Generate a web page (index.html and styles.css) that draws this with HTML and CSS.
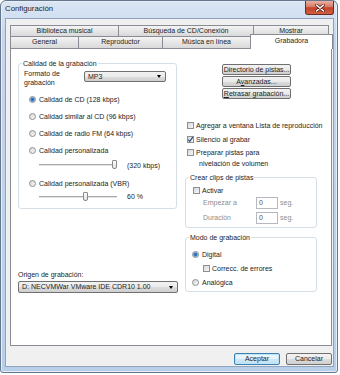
FILE: index.html
```html
<!DOCTYPE html>
<html>
    <head>
        <meta charset="utf-8" />
        <title>Configuración</title>
        <link rel="stylesheet" href="styles.css">
    </head>
    <body>
        <div class="window">
            <div class="titlebar">
                <span class="title">Configuración</span>
                <span class="close">
                    <svg width="10" height="8" viewBox="0 0 10 8">
                        <path d="M1.5 1 L8.5 7 M8.5 1 L1.5 7" stroke="#5a2017" stroke-width="3" stroke-linecap="round" />
                        <path d="M1.5 1 L8.5 7 M8.5 1 L1.5 7" stroke="#fff" stroke-width="1.6" stroke-linecap="round" />
                    </svg>
                </span>
            </div>
            <div class="client">
                <div class="tabRow">
                    <div class="tab tabBiblio">Biblioteca musical</div>
                    <div class="tab tabBusqueda">Búsqueda de CD/Conexión</div>
                    <div class="tab tabMostrar">Mostrar</div>
                </div>
                <div class="tabRow front">
                    <div class="tab tabGeneral">General</div>
                    <div class="tab tabRepro">Reproductor</div>
                    <div class="tab tabMusica">Música en línea</div>
                    <div class="tab tabGrabadora active">Grabadora</div>
                </div>
                <div class="panel">
                    <div class="col">
                        <fieldset class="group quality">
                            <legend>Calidad de la grabación</legend>
                            <div class="formatRow">
                                <span class="formatLabel">Formato de<br />grabación</span>
                                <div class="select formatSelect">MP3<span class="arrow"></span></div>
                            </div>
                            <div class="option first"><span class="radio checked"></span>Calidad de CD (128 kbps)</div>
                            <div class="option"><span class="radio"></span>Calidad similar al CD (96 kbps)</div>
                            <div class="option"><span class="radio"></span>Calidad de radio FM (64 kbps)</div>
                            <div class="option"><span class="radio"></span>Calidad personalizada</div>
                            <div class="sliderRow">
                                <span class="track"><span class="thumb" style="--pos: 1"></span></span>
                                <span>(320 kbps)</span>
                            </div>
                            <div class="option"><span class="radio"></span>Calidad personalizada (VBR)</div>
                            <div class="sliderRow last">
                                <span class="track"><span class="thumb" style="--pos: 0.6"></span></span>
                                <span>60 %</span>
                            </div>
                        </fieldset>
                        <div class="sourceLabel">Origen de grabación:</div>
                        <div class="select sourceSelect">D: NECVMWar VMware IDE CDR10 1.00<span class="arrow"></span></div>
                    </div>
                    <div class="col">
                        <div class="btnStack">
                            <div class="btn">Directorio de pistas...</div>
                            <div class="btn">A<u>v</u>anzadas...</div>
                            <div class="btn"><u>R</u>etrasar grabación...</div>
                        </div>
                        <div class="check firstCheck"><span class="box"></span>Agregar a ventana Lista de reproducción</div>
                        <div class="check">
                            <span class="box">
                                <svg width="7" height="7" viewBox="0 0 7 7"><path d="M1.2 3.6 L2.8 5.4 L5.8 1.2" fill="none" stroke="#2b4a7a" stroke-width="1.2" /></svg>
                            </span>Silencio al grabar
                        </div>
                        <div class="check multi">
                            <span class="box"></span>
                            <span>Preparar pistas para<br /><span class="indent">nivelación de volumen</span></span>
                        </div>
                        <fieldset class="group clips">
                            <legend>Crear clips de pistas</legend>
                            <div class="check activar"><span class="box"></span>Activar</div>
                            <div class="clipRow">
                                <span class="clipLabel">Empezar a</span>
                                <span class="numInput">0</span>
                                <span class="unit">seg.</span>
                            </div>
                            <div class="clipRow">
                                <span class="clipLabel">Duración</span>
                                <span class="numInput">0</span>
                                <span class="unit">seg.</span>
                            </div>
                        </fieldset>
                        <fieldset class="group mode">
                            <legend>Modo de grabación</legend>
                            <div class="option modeOption"><span class="radio checked"></span>Digital</div>
                            <div class="check errors"><span class="box"></span>Correcc. de errores</div>
                            <div class="option modeOption"><span class="radio"></span>Analógica</div>
                        </fieldset>
                    </div>
                </div>
                <div class="dialogButtons">
                    <div class="btn default">Aceptar</div>
                    <div class="btn">Cancelar</div>
                </div>
            </div>
        </div>
    </body>
</html>
```

FILE: styles.css
```css
body {
    margin: 0;
    background: #fff;
    font-family: 'Liberation Sans', Arial, sans-serif;
    font-size: 7px;
    line-height: 9px;
    color: #1c1c1c;
}

.window {
    width: 338px;
    height: 373px;
    box-sizing: border-box;
    border: 1px solid #66768c;
    border-radius: 6px 6px 3px 3px;
    background: linear-gradient(#dbe6f4, #c4d6ed 40px, #b8cfea);
    box-shadow: inset 0 0 0 1px #e6eef8;
    display: flex;
    flex-direction: column;
}

.titlebar {
    height: 16px;
    display: flex;
    justify-content: space-between;
    align-items: flex-start;
}

.title {
    font-size: 7.8px;
    line-height: 16px;
    margin-left: 4px;
    color: #1e1e1e;
}

.close {
    width: 29px;
    height: 14px;
    margin-right: 3px;
    box-sizing: border-box;
    border: 1px solid #6e2a20;
    border-top: none;
    border-radius: 0 0 3px 3px;
    background: linear-gradient(#eab0a3, #d77a64 45%, #c3412b 52%, #d0613f);
    display: flex;
    align-items: center;
    justify-content: center;
}

.client {
    flex: 1;
    margin: 1px 3px 5px 4px;
    border: 1px solid #8fa3bd;
    background: #f0f0f0;
    padding: 6px 1px 0 4px;
}

.tabRow {
    display: flex;
    height: 11px;
}

.tabRow.front {
    height: 12px;
}

.tab {
    box-sizing: border-box;
    border: 1px solid #898c95;
    border-bottom: none;
    margin-right: -1px;
    background: linear-gradient(#f4f4f4, #e6e6e6 50%, #d9d9d9);
    text-align: center;
    line-height: 10px;
}

.tabBiblio { width: 109px; }
.tabBusqueda { width: 136px; }
.tabMostrar { width: 76px; }
.tabGeneral { width: 69px; }
.tabRepro { width: 85px; }
.tabMusica { width: 89px; }

.tab.active {
    width: 83px;
    margin-top: -2px;
    margin-bottom: -1px;
    height: 15px;
    background: #fff;
    z-index: 1;
    line-height: 11px;
}

.panel {
    width: 322px;
    height: 298px;
    box-sizing: border-box;
    border: 1px solid #898c95;
    background: #fff;
    padding: 10px 0 0 7px;
    display: grid;
    grid-template-columns: 159px 132px;
    column-gap: 8px;
    align-items: start;
}

.col {
    display: flex;
    flex-direction: column;
    align-items: flex-start;
}

.group {
    margin: 0;
    min-width: 0;
    width: 100%;
    box-sizing: border-box;
    border: 1px solid #d5dfe5;
    border-radius: 3px;
    padding: 0 0 0 3px;
}

.group legend {
    padding: 0 1px;
    line-height: 9px;
}

.quality {
    padding-top: 1px;
    padding-bottom: 7px;
}

.formatRow {
    display: flex;
    margin-left: 2px;
}

.formatLabel {
    width: 60px;
}

.select {
    position: relative;
    box-sizing: border-box;
    border: 1px solid #707070;
    border-radius: 2px;
    background: linear-gradient(#f2f2f2, #ebebeb 50%, #dddddd 51%, #cfcfcf);
    line-height: 10px;
    padding-left: 3px;
}

.formatSelect {
    width: 82px;
    height: 11px;
    margin-top: 2px;
    line-height: 9px;
}

.arrow {
    position: absolute;
    right: 4px;
    top: 3px;
    border-left: 2.5px solid transparent;
    border-right: 2.5px solid transparent;
    border-top: 3px solid #000;
}

.option {
    display: flex;
    align-items: center;
    height: 17px;
    margin-left: 7px;
}

.option.first {
    margin-top: 4px;
}

.option + .sliderRow + .option {
    margin-top: 4px;
}

.radio {
    width: 7px;
    height: 7px;
    box-sizing: border-box;
    border: 1px solid #8e8f8f;
    border-radius: 50%;
    background: linear-gradient(135deg, #d6d6d6, #f8f8f8);
    margin-right: 3px;
}

.radio.checked {
    background: radial-gradient(circle, #1f5fa8 0, #3b7fd0 1.4px, #9cc3ec 2.4px, #eef2f6 2.6px);
}

.sliderRow {
    display: flex;
    align-items: center;
    height: 12px;
    margin-left: 17px;
}

.sliderRow.last {
    height: 9px;
}

.track {
    position: relative;
    width: 78px;
    height: 2px;
    box-sizing: border-box;
    border-top: 1px solid #a9a9a9;
    border-bottom: 1px solid #e3e3e3;
    margin-right: 10px;
}

.thumb {
    position: absolute;
    top: -5px;
    left: calc(var(--pos) * (100% - 5px));
    width: 5px;
    height: 9px;
    box-sizing: border-box;
    border: 1px solid #8a8a8a;
    border-radius: 1px 1px 2px 2px;
    background: linear-gradient(#fbfbfb, #e2e2e2);
}

.sourceLabel {
    margin-top: 61px;
}

.sourceSelect {
    width: 160px;
    height: 12px;
    margin-top: 2px;
}

.sourceSelect .arrow {
    top: 4px;
}

.btnStack {
    display: flex;
    flex-direction: column;
    gap: 1px;
    margin: 5px 0 0 37px;
}

.btn {
    box-sizing: border-box;
    border: 1px solid #707070;
    border-radius: 2px;
    background: linear-gradient(#f2f2f2, #ebebeb 50%, #dddddd 51%, #cfcfcf);
    text-align: center;
    white-space: nowrap;
}

.btnStack .btn {
    width: 69px;
    height: 11px;
    line-height: 9px;
}

.check {
    display: flex;
    align-items: center;
    height: 14px;
    margin-left: 2px;
    white-space: nowrap;
}

.firstCheck {
    margin-top: 19px;
}

.box {
    width: 7px;
    height: 7px;
    box-sizing: border-box;
    border: 1px solid #8e8f8f;
    background: linear-gradient(135deg, #d8d8d8, #f7f7f7);
    margin-right: 2px;
    display: flex;
    align-items: center;
    justify-content: center;
}

.box svg {
    flex: none;
}

.check.multi {
    height: auto;
    align-items: flex-start;
    line-height: 11px;
    margin-top: 1px;
}

.check.multi .box {
    margin-top: 2px;
}

.indent {
    padding-left: 3px;
}

.clips {
    margin-top: 4px;
    padding-bottom: 2px;
}

.check.activar {
    height: 9px;
    margin: 4px 0 0 4px;
}

.clipRow {
    display: flex;
    align-items: center;
    height: 15px;
    margin-left: 14px;
    color: #8d8d8d;
}

.clipLabel {
    width: 53px;
}

.numInput {
    width: 22px;
    height: 12px;
    box-sizing: border-box;
    border: 1px solid #b5b8c0;
    background: #fff;
    color: #555;
    padding-left: 2px;
    line-height: 10px;
    margin-right: 2px;
}

.mode {
    margin-top: 5px;
    padding-top: 5px;
    padding-bottom: 2px;
}

.modeOption {
    height: 14px;
    margin-left: 3px;
}

.check.errors {
    margin-left: 14px;
}

.dialogButtons {
    display: flex;
    justify-content: flex-end;
    gap: 6px;
    width: 322px;
    margin-top: 7px;
}

.dialogButtons .btn {
    width: 46px;
    height: 12px;
    line-height: 10px;
}

.btn.default {
    border-color: #3c7fb1;
    box-shadow: inset 0 0 0 1px #bfe6f8;
    background: linear-gradient(#eef7fc, #e3f2fb 50%, #cfe9f8 51%, #c0e0f3);
}
```
